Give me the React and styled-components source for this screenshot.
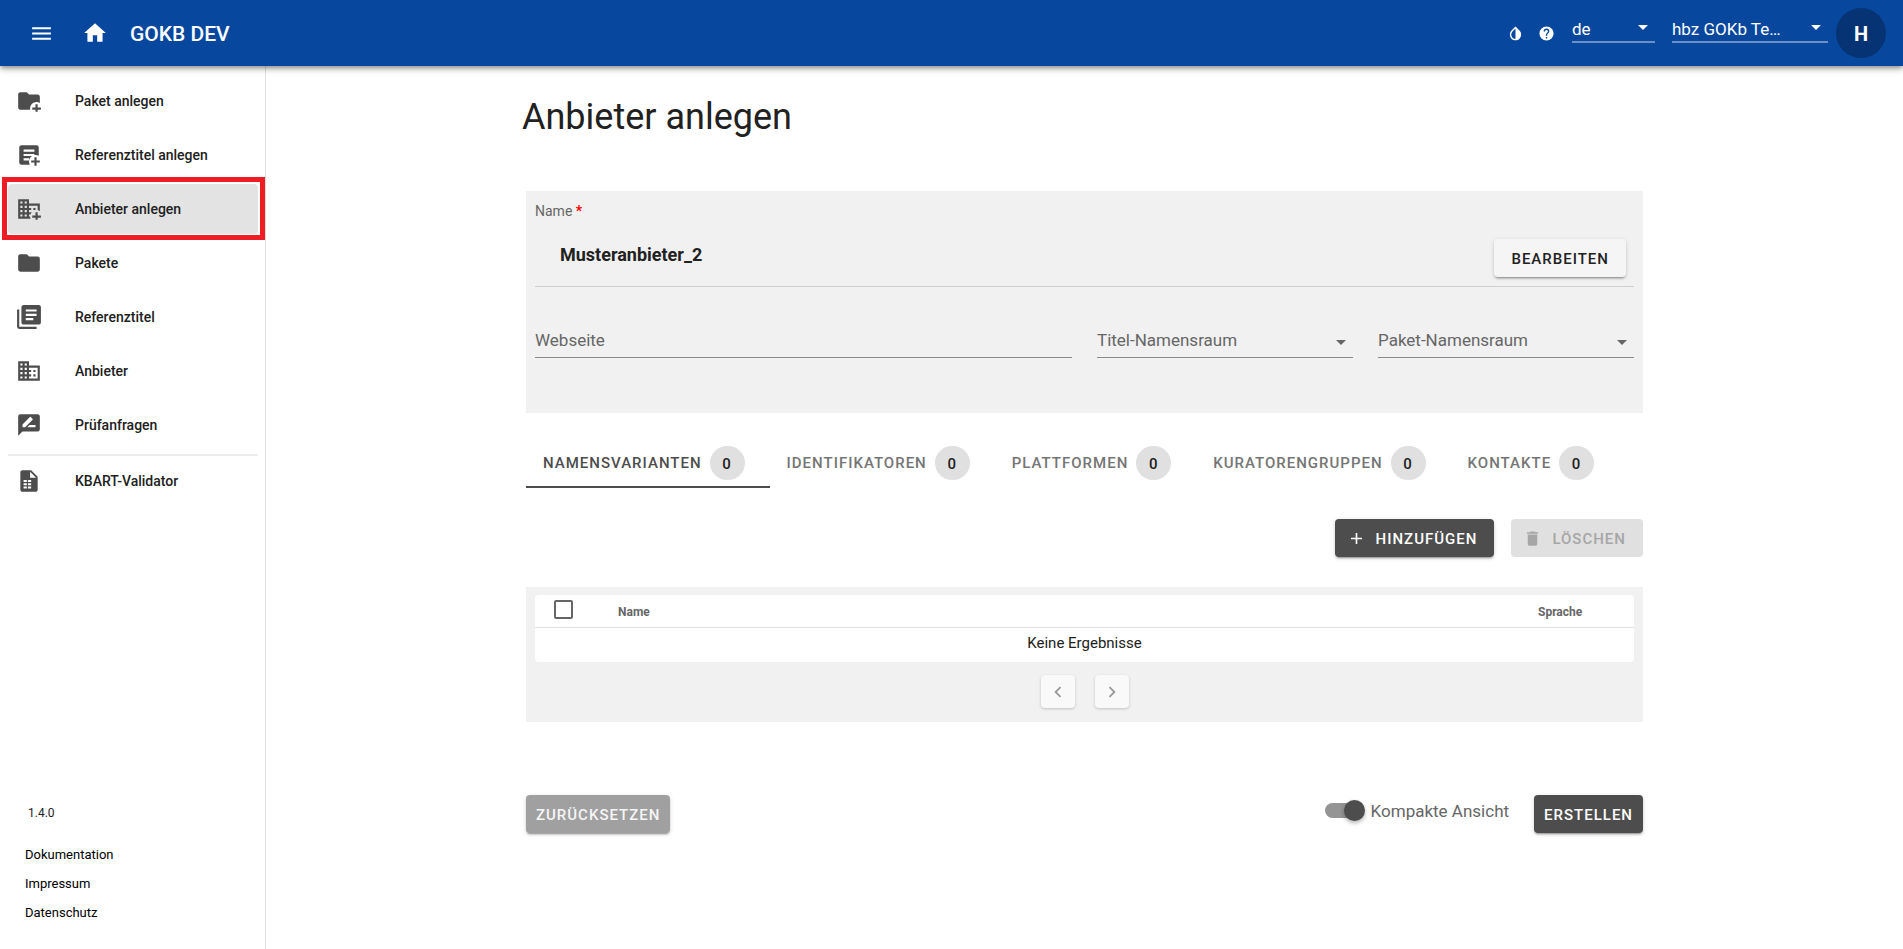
import React, { useState } from "react";
import styled, { createGlobalStyle, css } from "styled-components";

const GlobalStyle = createGlobalStyle`
  *, *::before, *::after { box-sizing: border-box; }
  body {
    margin: 0;
    background: #ffffff;
    color: #212121;
    font-family: Roboto, "Liberation Sans", sans-serif;
    font-size: 14px;
    line-height: 20px;
  }
  button, input, select { font-family: inherit; }
`;

const icons = {
  menu: "M3,6H21V8H3V6M3,11H21V13H3V11M3,16H21V18H3V16Z",
  home: "M10,20V14H14V20H19V12H22L12,3L2,12H5V20H10Z",
  contrast:
    "M12,19.58V19.58C10.4,19.58 8.89,18.96 7.76,17.83C6.62,16.69 6,15.19 6,13.58C6,12 6.62,10.47 7.76,9.34L12,5.1M17.66,7.93L12,2.27V2.27L6.34,7.93C3.22,11.05 3.22,16.12 6.34,19.24C7.9,20.8 9.95,21.58 12,21.58C14.05,21.58 16.1,20.8 17.66,19.24C20.78,16.12 20.78,11.05 17.66,7.93Z",
  help: "M15.07,11.25L14.17,12.17C13.45,12.89 13,13.5 13,15H11V14.5C11,13.39 11.45,12.39 12.17,11.67L13.41,10.41C13.78,10.05 14,9.55 14,9C14,7.89 13.1,7 12,7A2,2 0 0,0 10,9H8A4,4 0 0,1 12,5A4,4 0 0,1 16,9C16,9.88 15.64,10.67 15.07,11.25M13,19H11V17H13M12,2A10,10 0 0,0 2,12A10,10 0 0,0 12,22A10,10 0 0,0 22,12C22,6.47 17.5,2 12,2Z",
  folderPlus:
    "M13 19C13 19.34 13.04 19.67 13.09 20H4C2.9 20 2 19.11 2 18V6C2 4.89 2.89 4 4 4H10L12 6H20C21.1 6 22 6.89 22 8V13.81C21.12 13.3 20.1 13 19 13C15.69 13 13 15.69 13 19M20 18V15H18V18H15V20H18V22H20V20H23V18H20Z",
  textPlus:
    "M17,14H19V17H22V19H19V22H17V19H14V17H17V14M12,17V15H7V17H12M17,11H7V13H14.69C13.07,14.07 12,15.91 12,18C12,19.09 12.29,20.12 12.8,21H5C3.89,21 3,20.1 3,19V5C3,3.89 3.89,3 5,3H19A2,2 0 0,1 21,5V12.8C20.12,12.29 19.09,12 18,12L17,12.08V11M17,9V7H7V9H17Z",
  domainPlus:
    "M2 3H12V7H22V13.81C21.39 13.46 20.72 13.21 20 13.09V9H12V11H14V13H12V15H14.53C14 15.58 13.6 16.26 13.35 17H12V19H13C13 19.7 13.13 20.37 13.35 21H2V3M4 5V7H6V5H4M8 5V7H10V5H8M4 9V11H6V9H4M8 9V11H10V9H8M4 13V15H6V13H4M8 13V15H10V13H8M4 17V19H6V17H4M8 17V19H10V17H8M16 11H18V13H16V11M20 18V15H18V18H15V20H18V22H20V20H23V18H20Z",
  folder:
    "M10,4H4C2.89,4 2,4.89 2,6V18A2,2 0 0,0 4,20H20A2,2 0 0,0 22,18V8C22,6.89 21.1,6 20,6H12L10,4Z",
  textMultiple:
    "M16,15H9V13H16M19,11H9V9H19M19,7H9V5H19M21,1H7C5.89,1 5,1.89 5,3V17C5,18.11 5.9,19 7,19H21C22.11,19 23,18.11 23,17V3C23,1.89 22.1,1 21,1M3,5H1V21A2,2 0 0,0 3,23H19V21H3",
  domain:
    "M18,15H16V17H18M18,11H16V13H18M20,19H12V17H14V15H12V13H14V11H12V9H20M10,7H8V5H10M10,11H8V9H10M10,15H8V13H10M10,19H8V17H10M6,7H4V5H6M6,11H4V9H6M6,15H4V13H6M6,19H4V17H6M12,7V3H2V21H22V7H12Z",
  messageDraw:
    "M18,14H10.5L12.5,12H18M6,14V11.5L12.88,4.64C13.07,4.45 13.39,4.45 13.59,4.64L15.35,6.41C15.55,6.61 15.55,6.92 15.35,7.12L8.47,14M20,2H4A2,2 0 0,0 2,4V22L6,18H20A2,2 0 0,0 22,16V4C22,2.89 21.1,2 20,2Z",
  fileTable:
    "M14,2H6C4.89,2 4,2.9 4,4V20C4,21.11 4.89,22 6,22H18C19.11,22 20,21.11 20,20V8L14,2M13,3.5L18.5,9H13V3.5M7,11H10V13H7V11M11,11H14V13H11V11M7,14H10V16H7V14M11,14H14V16H11V14M7,17H10V19H7V17M11,17H14V19H11V17Z",
  plus: "M19,13H13V19H11V13H5V11H11V5H13V11H19V13Z",
  trash: "M19,4H15.5L14.5,3H9.5L8.5,4H5V6H19M6,19A2,2 0 0,0 8,21H16A2,2 0 0,0 18,19V7H6V19Z",
  left: "M15.41,16.58L10.83,12L15.41,7.41L14,6L8,12L14,18L15.41,16.58Z",
  right: "M8.59,16.58L13.17,12L8.59,7.41L10,6L16,12L10,18L8.59,16.58Z",
  caret: "M7,10L12,15L17,10H7Z",
};

const Svg = styled.svg`
  display: block;
  flex: none;
  width: ${(p) => p.$size}px;
  height: ${(p) => p.$size}px;
  fill: currentColor;
  fill-rule: evenodd;
`;

const Icon = ({ name, size = 24 }) => (
  <Svg $size={size} viewBox="0 0 24 24" aria-hidden="true">
    <path d={icons[name]} />
  </Svg>
);

const Page = styled.div`
  display: flex;
  flex-direction: column;
  min-height: 100vh;
`;

const TopBar = styled.header`
  display: flex;
  align-items: center;
  height: 66px;
  padding: 0 17px 0 21px;
  background: #07479e;
  color: #ffffff;
  box-shadow: 0 2px 4px -1px rgba(0, 0, 0, 0.3), 0 4px 5px rgba(0, 0, 0, 0.16),
    0 1px 10px rgba(0, 0, 0, 0.12);
  z-index: 1;
`;

const IconButton = styled.button`
  display: flex;
  align-items: center;
  justify-content: center;
  width: ${(p) => p.$width}px;
  height: 40px;
  padding: 0;
  border: 0;
  background: none;
  color: inherit;
  cursor: pointer;
`;

const HomeLink = styled.a`
  display: flex;
  margin: 0 22px 0 21px;
  color: inherit;
`;

const Brand = styled.span`
  padding-top: 2px;
  font-size: 21px;
  font-weight: 500;
  line-height: 28px;
`;

const Tools = styled.div`
  display: flex;
  align-items: center;
  margin-left: auto;
`;

const BarSelects = styled.div`
  display: flex;
  gap: 17px;
  margin: 0 8px 8px 10px;
`;

const SelectBox = styled.div`
  display: flex;
  align-items: ${(p) => (p.$bar ? "flex-start" : "center")};
  width: ${(p) => (p.$width ? `${p.$width}px` : "auto")};
  min-width: 0;
  color: ${(p) => (p.$bar ? "#ffffff" : "#666666")};
`;

const fieldLook = css`
  width: 100%;
  height: 33px;
  padding: 0 0 2px;
  border: 0;
  border-bottom: 1px solid #8b8b8b;
  border-radius: 0;
  background: none;
  color: #666666;
  font-size: 17px;
  line-height: 24px;
  outline: 0;
`;

const Select = styled.select`
  ${fieldLook}
  appearance: none;
  ${(p) =>
    p.$bar &&
    css`
      height: 28px;
      padding: 2px 0 0;
      border-bottom: 2px solid #6a91c6;
      color: #ffffff;
      option { color: #212121; }
    `}
`;

const CaretSlot = styled.span`
  display: flex;
  justify-content: flex-end;
  width: 0;
  pointer-events: none;
`;

const TextInput = styled.input`
  ${fieldLook}
  min-width: 0;
  &::placeholder {
    color: #666666;
    opacity: 1;
  }
`;

const Avatar = styled.button`
  width: 50px;
  height: 50px;
  padding: 2px 0 0;
  border: 0;
  border-radius: 50%;
  background: #053373;
  color: #ffffff;
  font-size: 20px;
  font-weight: 700;
`;

const Body = styled.div`
  display: flex;
  flex: 1;
`;

const Sidebar = styled.aside`
  display: flex;
  flex-direction: column;
  flex: none;
  width: 266px;
  padding: 10px 7px 26px 8px;
  border-right: 1px solid #e0e0e0;
`;

const Nav = styled.nav`
  display: flex;
  flex-direction: column;
  gap: 4px;
`;

const NavLink = styled.a`
  position: relative;
  display: flex;
  align-items: center;
  gap: 33px;
  height: 50px;
  padding: 0 8px;
  border-radius: 4px;
  color: #4d4d4d;
  text-decoration: none;
  ${(p) =>
    p.$active &&
    css`
      background: #e3e3e3;
      &::after {
        content: "";
        position: absolute;
        inset: -7px -7px -6px -6px;
        border: 5px solid #ee1c25;
      }
    `}
`;

const NavText = styled.span`
  color: #212121;
  font-size: 14px;
  font-weight: 500;
`;

const Divider = styled.hr`
  width: 100%;
  margin: 0 0 -4px;
  border: 0;
  border-top: 2px solid #ececec;
`;

const SideFooter = styled.footer`
  display: flex;
  flex-direction: column;
  gap: 9px;
  margin-top: auto;
  padding: 0 17px;
  font-size: 13px;
`;

const Version = styled.span`
  padding: 0 3px;
  margin-bottom: 13px;
  font-size: 12px;
`;

const FooterLink = styled.a`
  color: #000000;
  text-decoration: none;
`;

const Main = styled.main`
  flex: 1;
  min-width: 0;
  padding: 31px 24px;
`;

const Form = styled.form`
  max-width: 1117px;
  margin: 0 auto;
`;

const Title = styled.h1`
  margin: 0 -4px 54px;
  font-size: 36px;
  font-weight: 400;
  line-height: 40px;
`;

const Panel = styled.section`
  padding: ${(p) => p.$pad};
  background: #f1f1f1;
`;

const NameLabel = styled.div`
  color: #666666;
  font-size: 14px;
`;

const Required = styled.span`
  color: #ff0000;
  font-weight: 700;
`;

const NameRow = styled.div`
  display: flex;
  align-items: flex-start;
  justify-content: space-between;
  padding: 18px 8px 9px 25px;
  border-bottom: 1px solid #cfcfcf;
`;

const NameValue = styled.strong`
  font-size: 18px;
  font-weight: 700;
  line-height: 32px;
`;

const Fields = styled.div`
  display: grid;
  grid-template-columns: minmax(0, 537fr) minmax(0, 256fr) minmax(0, 256fr);
  gap: 25px;
  margin-top: 38px;
`;

const Button = styled.button`
  display: inline-flex;
  align-items: center;
  justify-content: center;
  gap: 10px;
  height: 38px;
  padding: 1px ${(p) => p.$pad || 17}px 0;
  border: 0;
  border-radius: 4px;
  font-size: 15px;
  font-weight: 500;
  letter-spacing: 1px;
  text-transform: uppercase;
  background: ${(p) => (p.$light ? "#f5f5f5" : "#4d4d4d")};
  color: ${(p) => (p.$light ? "#212121" : "#ffffff")};
  box-shadow: 0 3px 1px -2px rgba(0, 0, 0, 0.2), 0 2px 2px rgba(0, 0, 0, 0.14),
    0 1px 5px rgba(0, 0, 0, 0.12);
  ${(p) =>
    p.$muted &&
    css`
      background: #a0a0a0;
      color: #f5f5f5;
    `}
  &:disabled {
    background: #e0e0e0;
    color: #a6a6a6;
    box-shadow: none;
  }
  ${Svg} {
    margin-left: -5px;
  }
`;

const Tabs = styled.div`
  display: flex;
  margin-top: 25px;
`;

const Tab = styled.button`
  display: flex;
  align-items: center;
  gap: 8px;
  height: 50px;
  padding: 0 25px 0 17px;
  border: 0;
  background: none;
  color: ${(p) => (p.$active ? "#4d4d4d" : "#757575")};
  font-size: 15px;
  font-weight: 500;
  letter-spacing: 1px;
  text-transform: uppercase;
  box-shadow: ${(p) => (p.$active ? "inset 0 -2px #4d4d4d" : "none")};
`;

const Count = styled.span`
  width: 35px;
  height: 34px;
  border-radius: 17px;
  background: #e0e0e0;
  color: #212121;
  line-height: 36px;
  text-align: center;
`;

const Actions = styled.div`
  display: flex;
  justify-content: flex-end;
  gap: 17px;
  margin: 31px 0 30px;
`;

const Table = styled.table`
  width: 100%;
  border-spacing: 0;
  border-radius: 4px;
  background: #ffffff;
  table-layout: fixed;
`;

const HeadCell = styled.th`
  width: ${(p) => p.$width};
  height: 33px;
  padding: ${(p) => p.$pad || "1px 0 0"};
  border-bottom: 1px solid #e0e0e0;
  color: #666666;
  font-size: 12px;
  font-weight: 700;
  text-align: left;
`;

const EmptyCell = styled.td`
  height: 34px;
  padding: 0 0 4px;
  font-size: 15px;
  text-align: center;
`;

const CheckBox = styled.input`
  appearance: none;
  display: block;
  width: 19px;
  height: 19px;
  margin: 0;
  border: 2px solid #666666;
  border-radius: 2px;
  &:checked { background: #666666; }
`;

const Pager = styled.div`
  display: flex;
  justify-content: center;
  gap: 20px;
  margin-top: 13px;
`;

const PageButton = styled.button`
  display: flex;
  align-items: center;
  justify-content: center;
  width: 34px;
  height: 33px;
  padding: 0;
  border: 0;
  border-radius: 4px;
  background: #f9f9f9;
  color: #999999;
  box-shadow: 0 1px 3px rgba(0, 0, 0, 0.2);
`;

const BottomBar = styled.div`
  display: flex;
  align-items: flex-start;
  gap: 25px;
  margin-top: 73px;
`;

const SwitchLabel = styled.label`
  display: flex;
  align-items: center;
  gap: 6px;
  height: 31px;
  margin-left: auto;
  color: #666666;
  font-size: 17px;
`;

const Switch = styled.input`
  appearance: none;
  position: relative;
  width: 40px;
  height: 21px;
  margin: 0;
  &::before {
    content: "";
    position: absolute;
    inset: 3px 3px 3px 0;
    border-radius: 8px;
    background: #949494;
  }
  &::after {
    content: "";
    position: absolute;
    top: 0;
    left: ${(p) => (p.checked ? 19 : 0)}px;
    width: 21px;
    height: 21px;
    border-radius: 50%;
    background: #4d4d4d;
    box-shadow: 0 2px 4px rgba(0, 0, 0, 0.3);
  }
`;

const navEntries = [
  ["folderPlus", "Paket anlegen"],
  ["textPlus", "Referenztitel anlegen"],
  ["domainPlus", "Anbieter anlegen"],
  ["folder", "Pakete"],
  ["textMultiple", "Referenztitel"],
  ["domain", "Anbieter"],
  ["messageDraw", "Prüfanfragen"],
];

const tabNames = ["Namensvarianten", "Identifikatoren", "Plattformen", "Kuratorengruppen", "Kontakte"];

const NavItem = ({ icon, text, active }) => (
  <NavLink href="#" $active={active} aria-current={active ? "page" : undefined}>
    <Icon name={icon} size={26} />
    <NavText>{text}</NavText>
  </NavLink>
);

const Dropdown = ({ label, value, bar, width }) => (
  <SelectBox $bar={bar} $width={width}>
    <Select aria-label={label} $bar={bar} defaultValue={value}>
      <option>{value}</option>
    </Select>
    <CaretSlot>
      <Icon name="caret" />
    </CaretSlot>
  </SelectBox>
);

export default function App() {
  const [tab, setTab] = useState(0);
  const [compact, setCompact] = useState(true);
  return (
    <>
      <GlobalStyle />
      <Page>
        <TopBar>
          <IconButton type="button" $width={40} aria-label="Menü">
            <Icon name="menu" size={25} />
          </IconButton>
          <HomeLink href="#" aria-label="Startseite">
            <Icon name="home" size={26} />
          </HomeLink>
          <Brand>GOKB DEV</Brand>
          <Tools>
            <IconButton type="button" $width={31} aria-label="Farbschema">
              <Icon name="contrast" size={17} />
            </IconButton>
            <IconButton type="button" $width={31} aria-label="Hilfe">
              <Icon name="help" size={17} />
            </IconButton>
            <BarSelects>
              <Dropdown label="Sprache" value="de" bar width={83} />
              <Dropdown label="Kuratorengruppe" value="hbz GOKb Te…" bar width={156} />
            </BarSelects>
            <Avatar type="button">H</Avatar>
          </Tools>
        </TopBar>
        <Body>
          <Sidebar>
            <Nav>
              {navEntries.map(([icon, text], i) => (
                <NavItem key={text} icon={icon} text={text} active={i === 2} />
              ))}
              <Divider />
              <NavItem icon="fileTable" text="KBART-Validator" />
            </Nav>
            <SideFooter>
              <Version>1.4.0</Version>
              <FooterLink href="#">Dokumentation</FooterLink>
              <FooterLink href="#">Impressum</FooterLink>
              <FooterLink href="#">Datenschutz</FooterLink>
            </SideFooter>
          </Sidebar>
          <Main>
            <Form onSubmit={(e) => e.preventDefault()}>
              <Title>Anbieter anlegen</Title>
              <Panel $pad="10px 9px 55px">
                <NameLabel>
                  Name <Required>*</Required>
                </NameLabel>
                <NameRow>
                  <NameValue>Musteranbieter_2</NameValue>
                  <Button type="button" $light>Bearbeiten</Button>
                </NameRow>
                <Fields>
                  <TextInput type="url" aria-label="Webseite" placeholder="Webseite" />
                  <Dropdown label="Titel-Namensraum" value="Titel-Namensraum" />
                  <Dropdown label="Paket-Namensraum" value="Paket-Namensraum" />
                </Fields>
              </Panel>
              <Tabs role="tablist">
                {tabNames.map((name, i) => (
                  <Tab
                    key={name}
                    type="button"
                    role="tab"
                    aria-selected={i === tab}
                    $active={i === tab}
                    onClick={() => setTab(i)}
                  >
                    {name}
                    <Count>0</Count>
                  </Tab>
                ))}
              </Tabs>
              <Actions>
                <Button type="button">
                  <Icon name="plus" size={19} />
                  Hinzufügen
                </Button>
                <Button type="button" disabled>
                  <Icon name="trash" size={19} />
                  Löschen
                </Button>
              </Actions>
              <Panel $pad="8px 9px 14px">
                <Table>
                  <thead>
                    <tr>
                      <HeadCell $width="83px" $pad="0 0 3px 19px">
                        <CheckBox type="checkbox" aria-label="Alle auswählen" />
                      </HeadCell>
                      <HeadCell>Name</HeadCell>
                      <HeadCell $width="96px">Sprache</HeadCell>
                    </tr>
                  </thead>
                  <tbody>
                    <tr>
                      <EmptyCell colSpan={3}>Keine Ergebnisse</EmptyCell>
                    </tr>
                  </tbody>
                </Table>
                <Pager>
                  <PageButton type="button" aria-label="Vorherige Seite">
                    <Icon name="left" size={22} />
                  </PageButton>
                  <PageButton type="button" aria-label="Nächste Seite">
                    <Icon name="right" size={22} />
                  </PageButton>
                </Pager>
              </Panel>
              <BottomBar>
                <Button type="reset" $muted $pad={10}>Zurücksetzen</Button>
                <SwitchLabel>
                  <Switch
                    type="checkbox"
                    role="switch"
                    checked={compact}
                    onChange={(e) => setCompact(e.target.checked)}
                  />
                  Kompakte Ansicht
                </SwitchLabel>
                <Button type="submit" $pad={10}>Erstellen</Button>
              </BottomBar>
            </Form>
          </Main>
        </Body>
      </Page>
    </>
  );
}
